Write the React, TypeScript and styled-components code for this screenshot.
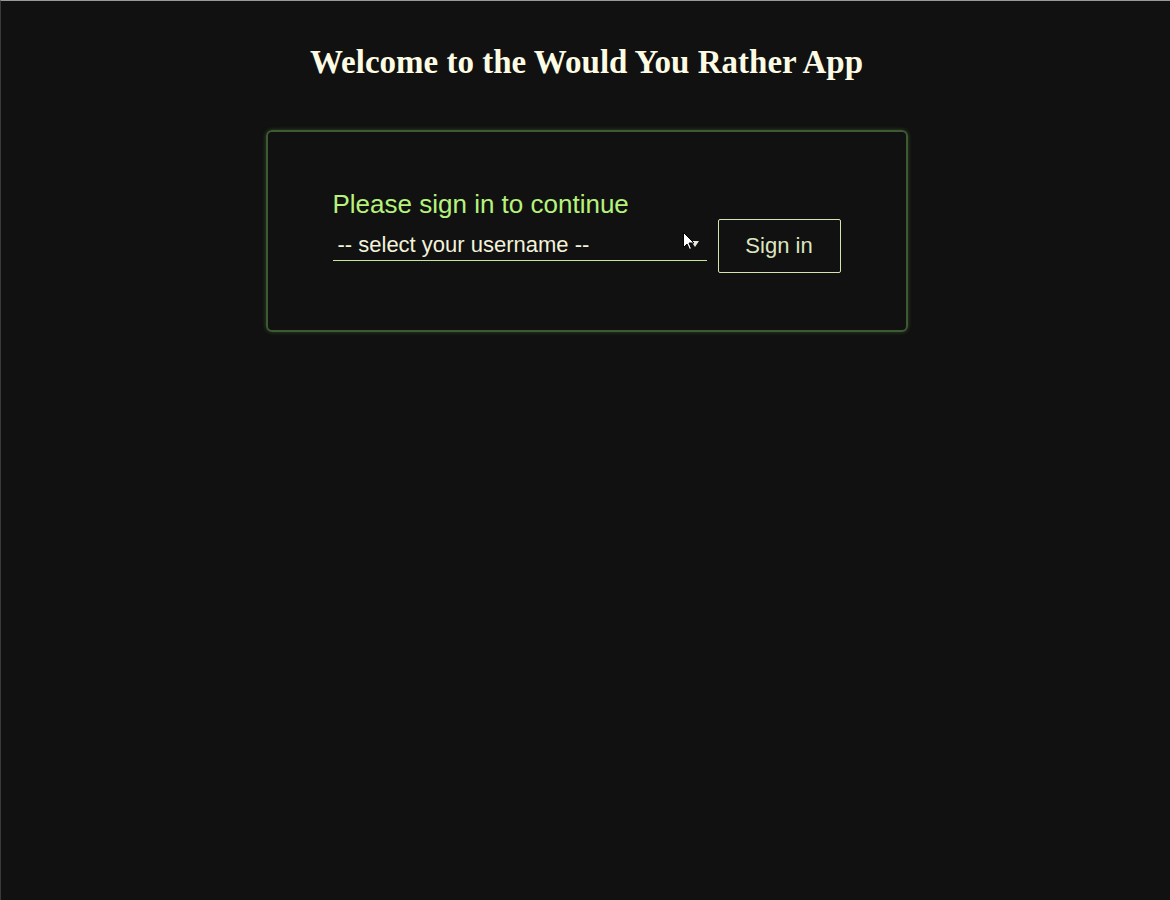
import React from "react";
import styled, { createGlobalStyle } from "styled-components";

const GlobalStyle = createGlobalStyle`
  html, body {
    margin: 0;
    padding: 0;
    background: #101110;
  }
  * { box-sizing: border-box; }
`;

const Page = styled.div`
  position: relative;
  min-height: 100vh;
  background: #101110;
  border-top: 1px solid #9a9a9a;
  border-left: 1px solid #3a3a3a;
  padding-top: 42px;
  padding-left: 2px;
  display: flex;
  flex-direction: column;
  align-items: center;
`;

const Title = styled.h1`
  margin: 0;
  font-family: "Liberation Serif", "Times New Roman", serif;
  font-weight: bold;
  font-size: 33px;
  line-height: 38px;
  color: #fdfbe4;
  text-align: center;
`;

const Card = styled.div`
  margin-top: 49px;
  width: 642px;
  height: 202px;
  border: 2px solid #3d5a32;
  border-radius: 6px;
  box-shadow: 0 0 4px rgba(90, 140, 60, 0.45);
  display: flex;
  align-items: flex-start;
  justify-content: center;
  gap: 11px;
  padding-top: 57px;
`;

const Form = styled.div`
  display: flex;
  flex-direction: column;
  width: 374px;
`;

const Label = styled.div`
  font-family: "Liberation Sans", Arial, sans-serif;
  font-size: 26px;
  line-height: 30px;
  color: #b6f27c;
`;

const SelectBox = styled.div`
  position: relative;
  margin-top: 10px;
  border-bottom: 1px solid #c4e89a;
  height: 32px;
  display: flex;
  align-items: center;
  padding-left: 5px;
  font-family: "Liberation Sans", Arial, sans-serif;
  font-size: 22px;
  color: #f3f2dc;
`;

const Arrow = styled.span`
  position: absolute;
  right: 8px;
  top: 12px;
  width: 0;
  height: 0;
  border-left: 4px solid transparent;
  border-right: 4px solid transparent;
  border-top: 6px solid #e8e8e0;
`;

const Button = styled.button`
  width: 123px;
  height: 54px;
  margin-top: 30px;
  background: transparent;
  border: 1px solid #d4e6b0;
  border-radius: 2px;
  font-family: "Liberation Sans", Arial, sans-serif;
  font-size: 22px;
  color: #dde6c0;
  cursor: pointer;
`;

const Cursor = styled.svg`
  position: absolute;
  left: 682px;
  top: 231px;
  width: 12px;
  height: 19px;
  pointer-events: none;
`;

export default function App() {
  return (
    <>
      <GlobalStyle />
      <Page>
        <Title>Welcome to the Would You Rather App</Title>
        <Card>
          <Form>
            <Label>Please sign in to continue</Label>
            <SelectBox>
              -- select your username --
              <Arrow />
            </SelectBox>
          </Form>
          <Button>Sign in</Button>
        </Card>
        <Cursor viewBox="0 0 12 19">
          <path
            d="M0.5 0.5 L0.5 15.5 L4 12 L6.5 17.5 L8.5 16.5 L6 11 L11 11 Z"
            fill="#ffffff"
            stroke="#000000"
            strokeWidth="1"
          />
        </Cursor>
      </Page>
    </>
  );
}
